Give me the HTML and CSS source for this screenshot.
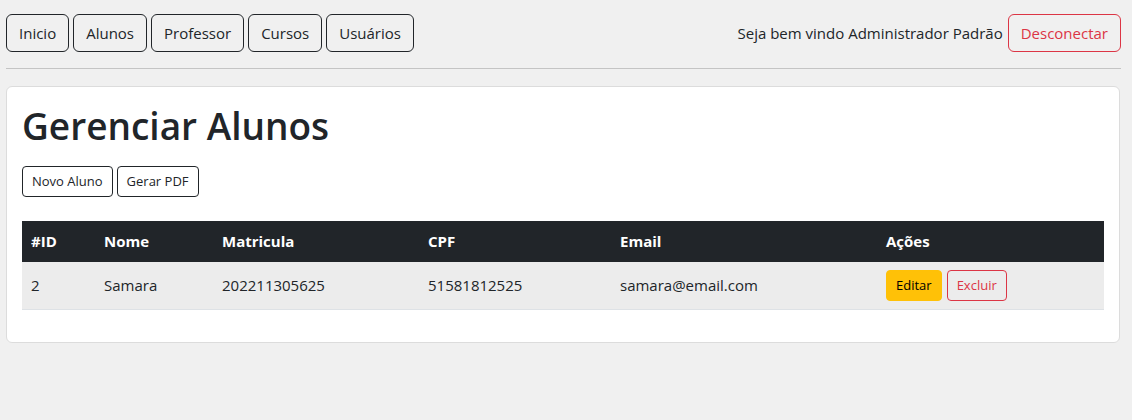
FILE: index.html
```html
<!DOCTYPE html>
<html lang="pt-BR">
<head>
<meta charset="utf-8">
<title>Gerenciar Alunos</title>
<link rel="stylesheet" href="styles.css">
</head>
<body>
<header class="topbar">
  <nav class="nav">
    <button class="btn btn-dark-outline">Inicio</button>
    <button class="btn btn-dark-outline">Alunos</button>
    <button class="btn btn-dark-outline">Professor</button>
    <button class="btn btn-dark-outline">Cursos</button>
    <button class="btn btn-dark-outline">Usuários</button>
  </nav>
  <div class="user">
    <span class="welcome">Seja bem vindo Administrador Padrão</span>
    <button class="btn btn-red-outline">Desconectar</button>
  </div>
</header>
<hr class="divider">
<main class="card">
  <h1 class="title">Gerenciar Alunos</h1>
  <div class="actions">
    <button class="btn btn-sm btn-dark-outline">Novo Aluno</button>
    <button class="btn btn-sm btn-dark-outline">Gerar PDF</button>
  </div>
  <table class="table">
    <colgroup>
      <col class="c-id"><col class="c-nome"><col class="c-mat"><col class="c-cpf"><col class="c-email"><col class="c-acoes">
    </colgroup>
    <thead>
      <tr><th>#ID</th><th>Nome</th><th>Matricula</th><th>CPF</th><th>Email</th><th>Ações</th></tr>
    </thead>
    <tbody>
      <tr>
        <td>2</td><td>Samara</td><td>202211305625</td><td>51581812525</td><td>samara@email.com</td>
        <td><div class="row-actions"><button class="btn btn-sm btn-yellow">Editar</button><button class="btn btn-sm btn-red-outline">Excluir</button></div></td>
      </tr>
    </tbody>
  </table>
</main>
</body>
</html>
```
FILE: styles.css
```css
* { box-sizing: border-box; }
body {
  margin: 0;
  padding: 14px 11px 0 6px;
  background: #f0f0f0;
  color: #212529;
  font-family: "Open Sans", "Noto Sans", sans-serif;
  font-size: 15px;
  line-height: 1.5;
}
.topbar {
  display: flex;
  justify-content: space-between;
  align-items: center;
}
.nav { display: flex; gap: 4px; }
.user { display: flex; align-items: center; gap: 5px; }
.btn {
  font-family: inherit;
  font-size: 15px;
  line-height: 24px;
  padding: 6px 12px;
  border-radius: 6px;
  background: transparent;
  cursor: pointer;
}
.btn-dark-outline { border: 1px solid #212529; color: #212529; }
.btn-red-outline { border: 1px solid #dc3545; color: #dc3545; }
.btn-yellow { border: 1px solid #ffc107; background: #ffc107; color: #000; }
.btn-sm {
  font-size: 13px;
  line-height: 21px;
  padding: 4px 9px;
  border-radius: 4px;
}
.divider {
  margin: 16px 0 17px;
  border: 0;
  border-top: 1px solid #c4c4c4;
}
.card {
  background: #fff;
  border: 1px solid #dcdcdc;
  border-radius: 6px;
  padding: 15px 15px 16px;
  margin-right: 1px;
}
.title {
  margin: 0 0 16px;
  font-size: 37px;
  line-height: 48px;
  font-weight: 600;
}
.actions { display: flex; gap: 4px; margin-bottom: 24px; }
.table {
  width: 100%;
  border-collapse: collapse;
  table-layout: fixed;
  margin-bottom: 16px;
}
.c-id { width: 73px; }
.c-nome { width: 118px; }
.c-mat { width: 206px; }
.c-cpf { width: 192px; }
.c-email { width: 266px; }
.table th {
  background: #212529;
  color: #fff;
  text-align: left;
  font-weight: 700;
  padding: 8px 9px;
  line-height: 24px;
  border-bottom: 1px solid #212529;
}
.table td {
  background: #ececec;
  padding: 8px 9px;
  border-bottom: 1px solid #dee2e6;
  vertical-align: middle;
}
.row-actions { display: flex; gap: 5px; }
```
